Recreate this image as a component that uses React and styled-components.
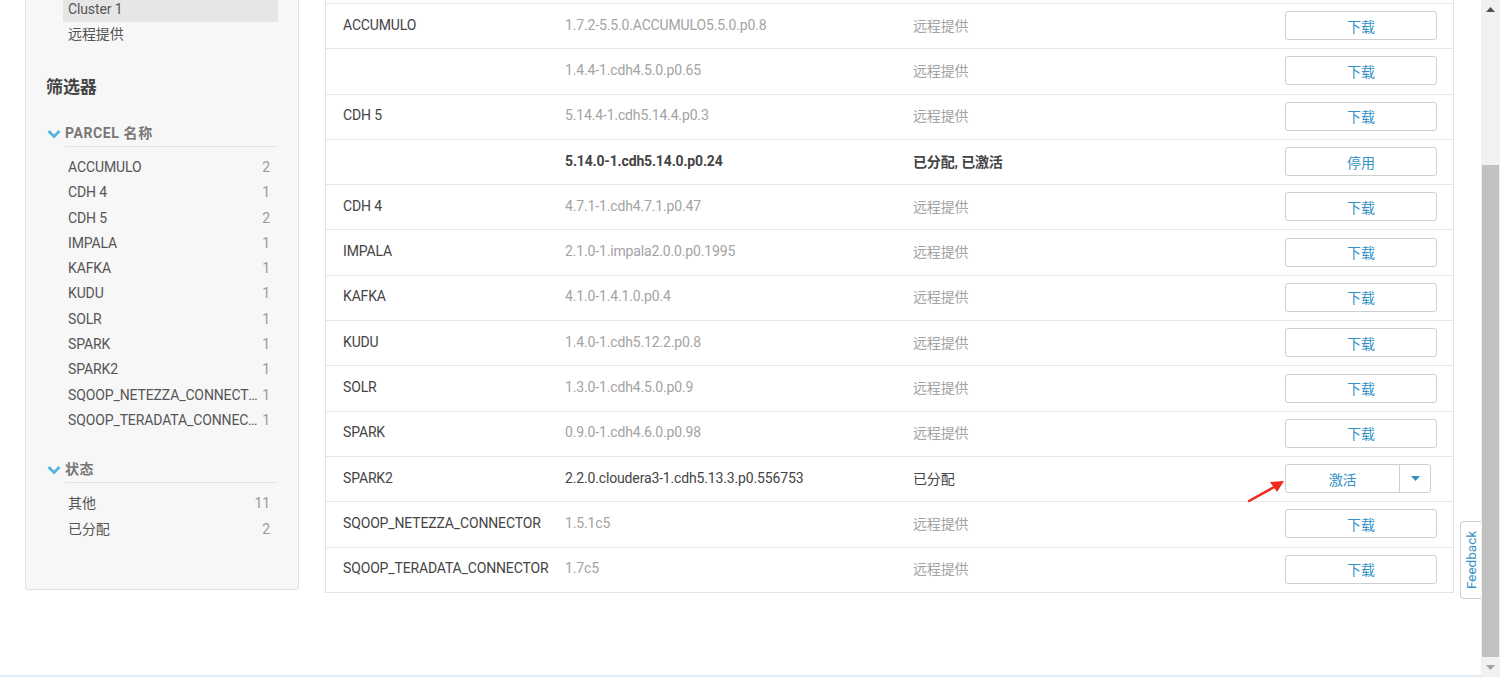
import React from 'react'
import styled, { createGlobalStyle } from 'styled-components'

const GlobalStyle = createGlobalStyle`
	html, body {
		margin: 0;
		padding: 0;
		background: #fff;
		overflow: hidden;
	}
	body {
		font-family: Roboto, "Noto Sans CJK SC", sans-serif;
		font-size: 14px;
		color: #444;
	}
`

const parcels = [
	{ name: 'ACCUMULO', version: '1.7.2-5.5.0.ACCUMULO5.5.0.p0.8', status: '远程提供', action: '下载' },
	{ name: '', version: '1.4.4-1.cdh4.5.0.p0.65', status: '远程提供', action: '下载' },
	{ name: 'CDH 5', version: '5.14.4-1.cdh5.14.4.p0.3', status: '远程提供', action: '下载' },
	{ name: '', version: '5.14.0-1.cdh5.14.0.p0.24', status: '已分配, 已激活', action: '停用', tone: 'bold' },
	{ name: 'CDH 4', version: '4.7.1-1.cdh4.7.1.p0.47', status: '远程提供', action: '下载' },
	{ name: 'IMPALA', version: '2.1.0-1.impala2.0.0.p0.1995', status: '远程提供', action: '下载' },
	{ name: 'KAFKA', version: '4.1.0-1.4.1.0.p0.4', status: '远程提供', action: '下载' },
	{ name: 'KUDU', version: '1.4.0-1.cdh5.12.2.p0.8', status: '远程提供', action: '下载' },
	{ name: 'SOLR', version: '1.3.0-1.cdh4.5.0.p0.9', status: '远程提供', action: '下载' },
	{ name: 'SPARK', version: '0.9.0-1.cdh4.6.0.p0.98', status: '远程提供', action: '下载' },
	{ name: 'SPARK2', version: '2.2.0.cloudera3-1.cdh5.13.3.p0.556753', status: '已分配', action: '激活', tone: 'dark', split: true },
	{ name: 'SQOOP_NETEZZA_CONNECTOR', version: '1.5.1c5', status: '远程提供', action: '下载' },
	{ name: 'SQOOP_TERADATA_CONNECTOR', version: '1.7c5', status: '远程提供', action: '下载' },
]

const nameFilters = [
	['ACCUMULO', 2], ['CDH 4', 1], ['CDH 5', 2], ['IMPALA', 1], ['KAFKA', 1], ['KUDU', 1],
	['SOLR', 1], ['SPARK', 1], ['SPARK2', 1], ['SQOOP_NETEZZA_CONNECTOR', 1], ['SQOOP_TERADATA_CONNECTOR', 1],
]

const statusFilters = [['其他', 11], ['已分配', 2]]

const Page = styled.div`
	display: flex;
	height: 100vh;
	width: 100vw;
	overflow: hidden;
`

const Viewport = styled.div`
	flex: 1;
	display: flex;
	flex-direction: column;
	position: relative;
`

const Content = styled.div`
	flex: 1;
	display: flex;
	align-items: flex-start;
	gap: 26px;
	padding: 0 27px 0 25px;
`

const BottomStrip = styled.div`
	height: 2px;
	background: #dfecf5;
`

const Sidebar = styled.div`
	width: 274px;
	box-sizing: border-box;
	margin-top: -20px;
	padding: 16px 20px 47px 20px;
	background: #f7f7f7;
	border: 1px solid #e0e0e0;
	border-radius: 3px;
	letter-spacing: -0.12px;
`

const SourceList = styled.div`
	padding-left: 17px;
`

const SourceItem = styled.div`
	height: 25px;
	line-height: 25px;
	padding-left: 5px;
	color: #555;
	background: ${p => (p.active ? '#e6e6e6' : 'transparent')};
`

const SideTitle = styled.div`
	margin-top: 28px;
	font-size: 17px;
	line-height: 24px;
	font-weight: 700;
	color: #444;
`

const FilterGroup = styled.div`
	margin-top: ${p => p.top}px;
`

const FilterHeader = styled.div`
	display: flex;
	align-items: flex-start;
	font-weight: 700;
	color: #777;
	letter-spacing: 0.6px;
`

const Chevron = styled.svg`
	width: 14px;
	height: 10px;
	margin: 6px 4px 0 1px;
	flex-shrink: 0;
`

const HeaderText = styled.div`
	flex: 1;
	line-height: 20px;
	padding-bottom: 3px;
	border-bottom: 1px solid #e3e3e3;
`

const FilterList = styled.div`
	margin-top: 8px;
	padding-left: 17px;
`

const FilterItem = styled.div`
	display: flex;
	height: 25.3px;
	line-height: 25.3px;
	padding: 0 8px 0 5px;
	color: #555;
`

const FilterName = styled.span`
	flex: 1;
	min-width: 0;
	overflow: hidden;
	text-overflow: ellipsis;
	white-space: nowrap;
`

const Count = styled.span`
	flex-shrink: 0;
	margin-left: 3px;
	color: #999;
`

const Table = styled.div`
	flex: 1;
	padding-top: 3px;
	border: 1px solid #e3e3e3;
	border-top: none;
	background: #fff;
`

const Row = styled.div`
	display: grid;
	grid-template-columns: 222px 348px 1fr 152px;
	align-items: center;
	box-sizing: border-box;
	height: 45.3px;
	padding: 0 16px 0 17px;
	border-top: 1px solid #e6e6e6;
	letter-spacing: -0.15px;
	font-weight: ${p => (p.tone === 'bold' ? 700 : 400)};
`

const NameCell = styled.div`
	color: #444;
	margin-top: -3px;
`

const MutedCell = styled.div`
	margin-top: -3px;
	color: ${p => (p.tone ? '#444' : '#a3a3a3')};
`

const Button = styled.button`
	height: 29px;
	width: 152px;
	margin-top: -1px;
	border: 1px solid #cfcfcf;
	border-radius: 3px;
	background: #fff;
	color: #3592c6;
	font-family: Roboto, "Noto Sans CJK SC", sans-serif;
	font-size: 14px;
	padding: 0;
`

const SplitGroup = styled.div`
	display: flex;
	width: 146px;
	height: 29px;
	margin-top: -1px;
	border: 1px solid #cfcfcf;
	border-radius: 3px;
	box-sizing: border-box;
	overflow: hidden;
`

const SplitMain = styled.div`
	flex: 1;
	display: flex;
	align-items: center;
	justify-content: center;
	color: #3592c6;
	border-right: 1px solid #cfcfcf;
`

const SplitCaret = styled.div`
	width: 30px;
	display: flex;
	align-items: center;
	justify-content: center;
`

const Arrow = styled.svg`
	position: absolute;
	left: 1246px;
	top: 477px;
`

const FeedbackTab = styled.div`
	position: absolute;
	right: 0;
	top: 521px;
	width: 20px;
	height: 76px;
	border: 1px solid #d0d0d0;
	border-right: none;
	border-radius: 4px 0 0 4px;
	background: #fff;
	display: flex;
	align-items: center;
	justify-content: center;
`

const FeedbackText = styled.span`
	transform: rotate(-90deg);
	font-size: 13.5px;
	color: #3592c6;
	white-space: nowrap;
`

const Scrollbar = styled.div`
	width: 19px;
	background: #f1f1f1;
	display: flex;
	flex-direction: column;
	align-items: center;
`

const ScrollArrow = styled.div`
	height: 19px;
	display: flex;
	align-items: center;
	justify-content: center;
`

const ScrollTrack = styled.div`
	flex: 1;
	width: 100%;
	display: flex;
	flex-direction: column;
	padding: 0 1px;
	box-sizing: border-box;
`

const ScrollThumb = styled.div`
	margin-top: 146px;
	height: 492px;
	background: #c1c1c1;
`

const ChevronIcon = () => (
	<Chevron viewBox="0 0 14 10">
		<polyline points="1.5,2 7,7.5 12.5,2" fill="none" stroke="#5ab4e0" strokeWidth="3" />
	</Chevron>
)

const ActionCell = ({ parcel }) => {
	if (parcel.split) {
		return (
			<SplitGroup>
				<SplitMain>{parcel.action}</SplitMain>
				<SplitCaret>
					<svg width="9" height="5" viewBox="0 0 9 5"><polygon points="0,0 9,0 4.5,5" fill="#3592c6" /></svg>
				</SplitCaret>
			</SplitGroup>
		)
	}
	return <Button>{parcel.action}</Button>
}

const FilterSection = ({ title, items, top }) => (
	<FilterGroup top={top}>
		<FilterHeader><ChevronIcon /><HeaderText>{title}</HeaderText></FilterHeader>
		<FilterList>
			{items.map(([name, count]) => (
				<FilterItem key={name}><FilterName>{name}</FilterName><Count>{count}</Count></FilterItem>
			))}
		</FilterList>
	</FilterGroup>
)

const App = () => {
	return (
		<Page>
			<GlobalStyle />
			<Viewport>
				<Content>
					<Sidebar>
						<SourceList>
							<SourceItem active>Cluster 1</SourceItem>
							<SourceItem>远程提供</SourceItem>
						</SourceList>
						<SideTitle>筛选器</SideTitle>
						<FilterSection title="PARCEL 名称" items={nameFilters} top={24} />
						<FilterSection title="状态" items={statusFilters} top={26} />
					</Sidebar>
					<Table>
						{parcels.map((parcel, index) => (
							<Row key={index} tone={parcel.tone}>
								<NameCell>{parcel.name}</NameCell>
								<MutedCell tone={parcel.tone}>{parcel.version}</MutedCell>
								<MutedCell tone={parcel.tone}>{parcel.status}</MutedCell>
								<ActionCell parcel={parcel} />
							</Row>
						))}
					</Table>
				</Content>
				<BottomStrip />
				<Arrow width="42" height="28" viewBox="0 0 42 28">
					<line x1="3" y1="24" x2="30" y2="9" stroke="#f2291c" strokeWidth="2.5" strokeLinecap="round" />
					<polygon points="38,4 24,5 31,15" fill="#f2291c" />
				</Arrow>
				<FeedbackTab><FeedbackText>Feedback</FeedbackText></FeedbackTab>
			</Viewport>
			<Scrollbar>
				<ScrollArrow>
					<svg width="9" height="5" viewBox="0 0 9 5"><polygon points="0,5 9,5 4.5,0" fill="#505050" /></svg>
				</ScrollArrow>
				<ScrollTrack>
					<ScrollThumb />
				</ScrollTrack>
				<ScrollArrow>
					<svg width="9" height="5" viewBox="0 0 9 5"><polygon points="0,0 9,0 4.5,5" fill="#a3a3a3" /></svg>
				</ScrollArrow>
			</Scrollbar>
		</Page>
	)
}

export default App
